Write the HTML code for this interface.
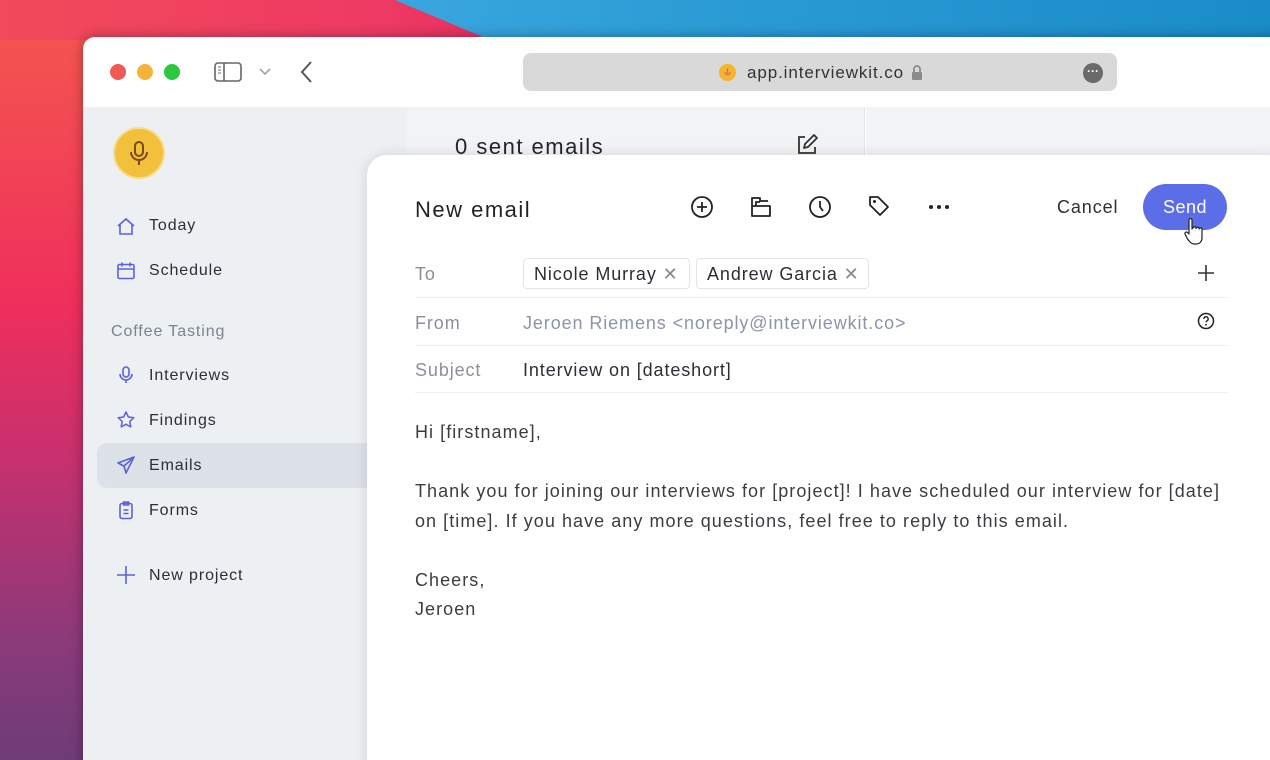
<!DOCTYPE html>
<html><head><meta charset="utf-8"><style>
*{margin:0;padding:0;box-sizing:border-box}
html,body{width:1270px;height:760px;overflow:hidden;font-family:"Liberation Sans",sans-serif;letter-spacing:.9px}
body{position:relative;background:linear-gradient(180deg,#f45a4e 0%,#ef2f5c 40%,#c8306e 60%,#8a3a7a 85%,#6e3c78 100%)}
.sky{position:absolute;left:0;top:0;width:1270px;height:40px;background:linear-gradient(90deg,#f24a5a 0%,#ee3a64 30%,#e83060 38%)}
.blue{position:absolute;left:0;top:0;width:1270px;height:40px;background:linear-gradient(90deg,#4ab4e8,#2a9ad4 60%,#1a8cc8);clip-path:polygon(395px 0,1270px 0,1270px 40px,490px 40px)}
.win{position:absolute;left:83px;top:37px;width:1200px;height:740px;background:#fff;border-radius:12px 0 0 0;overflow:hidden;box-shadow:0 0 12px rgba(0,0,0,.35)}
.a{position:absolute}
.tl{position:absolute;top:27px;width:16px;height:16px;border-radius:50%}
.side{position:absolute;left:0;top:70px;width:324px;height:680px;background:#edf0f3}
.mid{position:absolute;left:324px;top:70px;width:458px;height:680px;background:#f2f3f5;border-right:1px solid #e3e5e8}
.right{position:absolute;left:783px;top:70px;width:420px;height:680px;background:#f3f4f6}
.item{position:absolute;left:66px;font-size:16px;color:#2b2f36;margin-top:2px}
.ic{position:absolute;left:33px}
.modal{position:absolute;left:367px;top:155px;width:920px;height:620px;background:#fff;border-radius:20px 20px 0 0;box-shadow:0 0 14px rgba(0,0,0,.12)}
.m{position:absolute}
.lbl{position:absolute;left:48px;font-size:18px;color:#8a8f98}
.line{position:absolute;left:48px;width:812px;height:1px;background:#eceef1}
.chip{position:absolute;top:103px;height:31px;border:1px solid #e2e4e8;border-radius:4px;font-size:18px;color:#2b2f36;padding:5px 0 0 10px;white-space:nowrap}
.body{position:absolute;left:48px;font-size:18px;color:#3a3d42;white-space:nowrap;letter-spacing:1.05px}
</style></head><body>
<div class="sky"></div><div class="blue"></div>
<div class="win">
  <div class="tl" style="left:27px;background:#f05a52"></div>
  <div class="tl" style="left:54px;background:#f6b33a"></div>
  <div class="tl" style="left:81px;background:#2cc840"></div>
  <svg class="a" style="left:131px;top:25px" width="28" height="20" viewBox="0 0 28 20"><rect x="1" y="1" width="26" height="18" rx="3" fill="none" stroke="#666" stroke-width="1.6"/><line x1="10" y1="1" x2="10" y2="19" stroke="#666" stroke-width="1.6"/><path d="M4 5h3M4 8h3M4 11h3" stroke="#888" stroke-width="1.2"/></svg>
  <svg class="a" style="left:176px;top:31px" width="12" height="8"><path d="M1 1l5 5 5-5" fill="none" stroke="#999" stroke-width="1.5"/></svg>
  <svg class="a" style="left:216px;top:23px" width="14" height="24"><path d="M12 2L3 12l9 10" fill="none" stroke="#555" stroke-width="2"/></svg>
  <div class="a" style="left:440px;top:16px;width:594px;height:38px;background:#d9d9d9;border-radius:8px"></div>
  <div class="a" style="left:636px;top:27px;width:17px;height:17px;border-radius:50%;background:#f5b330"><svg width="17" height="17"><path d="M8.5 4.5v5M6 8a2.5 2.5 0 005 0" stroke="#c66" stroke-width="1.2" fill="none"/></svg></div>
  <div class="a" style="left:664px;top:26px;font-size:17px;color:#333">app.interviewkit.co</div>
  <svg class="a" style="left:828px;top:27px" width="12" height="17"><path d="M3 8V5a3 3 0 016 0v3" fill="none" stroke="#8a8a8a" stroke-width="1.8"/><rect x="1" y="8" width="10" height="8" rx="1" fill="#8a8a8a"/></svg>
  <div class="a" style="left:1000px;top:26px;width:20px;height:20px;border-radius:50%;background:#6a6a6a;color:#fff;font-size:12px;text-align:center;line-height:16px;font-weight:bold;letter-spacing:0">···</div>
  <div class="side">
    <div class="a" style="left:30px;top:20px;width:52px;height:52px;border-radius:50%;background:#f2c03a;border:2px solid #f7dc8e"><svg width="48" height="48" viewBox="0 0 48 48"><rect x="20" y="13" width="8" height="14" rx="4" fill="none" stroke="#7a4a1a" stroke-width="2"/><path d="M16 23a8 8 0 0016 0M24 31v5" fill="none" stroke="#7a4a1a" stroke-width="2"/></svg></div>
    <svg class="ic" style="top:109px" width="20" height="20" viewBox="0 0 20 20"><path d="M2 10L10 3l8 7M4 8.5V18h12V8.5" fill="none" stroke="#5a62d8" stroke-width="1.6"/></svg>
    <div class="item" style="top:108px">Today</div>
    <svg class="ic" style="top:154px" width="20" height="20" viewBox="0 0 20 20"><rect x="2" y="3.5" width="16" height="14" rx="1.5" fill="none" stroke="#5a62d8" stroke-width="1.6"/><path d="M2 8h16M6 1.5v4M14 1.5v4" stroke="#5a62d8" stroke-width="1.6"/></svg>
    <div class="item" style="top:153px">Schedule</div>
    <div class="item" style="left:28px;top:214px;color:#7b8290">Coffee Tasting</div>
    <svg class="ic" style="top:258px" width="20" height="20" viewBox="0 0 20 20"><rect x="7" y="2" width="6" height="10" rx="3" fill="none" stroke="#5a62d8" stroke-width="1.6"/><path d="M4 9a6 6 0 0012 0M10 15v3" fill="none" stroke="#5a62d8" stroke-width="1.6"/></svg>
    <div class="item" style="top:258px">Interviews</div>
    <svg class="ic" style="top:303px" width="20" height="20" viewBox="0 0 20 20"><path d="M10 2l2.4 5 5.4.7-4 3.8 1 5.4L10 14.3 5.2 16.9l1-5.4-4-3.8 5.4-.7z" fill="none" stroke="#5a62d8" stroke-width="1.5" stroke-linejoin="round"/></svg>
    <div class="item" style="top:303px">Findings</div>
    <div class="a" style="left:14px;top:336px;width:310px;height:45px;background:#dde1e8;border-radius:10px 0 0 10px"></div>
    <svg class="ic" style="top:348px" width="20" height="20" viewBox="0 0 20 20"><path d="M18 2L2 8l6 3 2 7zM8 11l10-9" fill="none" stroke="#5a62d8" stroke-width="1.6" stroke-linejoin="round"/></svg>
    <div class="item" style="top:348px">Emails</div>
    <svg class="ic" style="top:393px" width="20" height="20" viewBox="0 0 20 20"><rect x="4" y="3.5" width="12" height="15" rx="2" fill="none" stroke="#5a62d8" stroke-width="1.6"/><path d="M7.5 2h5v3h-5zM7.5 10h5M7.5 13.5h5" fill="none" stroke="#5a62d8" stroke-width="1.5"/></svg>
    <div class="item" style="top:393px">Forms</div>
    <svg class="ic" style="top:458px" width="20" height="20"><path d="M10 1v18M1 10h18" stroke="#5a62d8" stroke-width="1.6"/></svg>
    <div class="item" style="top:458px">New project</div>
  </div>
  <div class="mid">
    <div class="a" style="left:48px;top:27px;font-size:22px;color:#22252a;font-weight:500;letter-spacing:1.5px">0 sent emails</div>
    <svg class="a" style="left:388px;top:26px" width="24" height="24" viewBox="0 0 24 24"><path d="M10 4H4v16h16v-6" fill="none" stroke="#333" stroke-width="1.8"/><path d="M9 15l1-4 9-9 3 3-9 9z" fill="none" stroke="#333" stroke-width="1.8" stroke-linejoin="round"/></svg>
  </div>
  <div class="right"></div>
</div>
<div class="modal">
  <div class="m" style="left:48px;top:42px;font-size:22px;color:#1f2227;font-weight:500;letter-spacing:1.5px">New email</div>
  <svg class="m" style="left:323px;top:40px" width="24" height="24" viewBox="0 0 24 24"><circle cx="12" cy="12" r="10" fill="none" stroke="#222" stroke-width="1.8"/><path d="M12 7v10M7 12h10" stroke="#222" stroke-width="1.8"/></svg>
  <svg class="m" style="left:382px;top:40px" width="24" height="24" viewBox="0 0 24 24"><path d="M3 11V3h8v3h8M3 11h18v10H3z" fill="none" stroke="#222" stroke-width="1.8" stroke-linejoin="round"/><path d="M7 11V7h4" fill="none" stroke="#222" stroke-width="1.8"/></svg>
  <svg class="m" style="left:441px;top:40px" width="24" height="24" viewBox="0 0 24 24"><circle cx="12" cy="12" r="10" fill="none" stroke="#222" stroke-width="1.8"/><path d="M12 6v6l3 4" fill="none" stroke="#222" stroke-width="1.8"/></svg>
  <svg class="m" style="left:500px;top:39px" width="24" height="24" viewBox="0 0 24 24"><path d="M3 3h8l10 10-8 8L3 11z" fill="none" stroke="#222" stroke-width="1.8" stroke-linejoin="round"/><circle cx="7.5" cy="7.5" r="1.5" fill="#222"/></svg>
  <div class="m" style="left:560px;top:40px;width:26px;height:26px"><svg width="26" height="26"><circle cx="4" cy="12" r="2" fill="#222"/><circle cx="12" cy="12" r="2" fill="#222"/><circle cx="20" cy="12" r="2" fill="#222"/></svg></div>
  <div class="m" style="left:690px;top:42px;font-size:18px;color:#2b2f36">Cancel</div>
  <div class="m" style="left:776px;top:29px;width:84px;height:46px;border-radius:23px;background:#5b6ee8;color:#fff;font-size:18px;font-weight:500;text-align:center;line-height:46px;letter-spacing:.5px">Send</div>
  <svg class="m" style="left:816px;top:63px" width="20" height="28" viewBox="0 0 20 28"><path d="M6 2a1.5 1.5 0 013 0v9l1-1a1.5 1.5 0 013 .5 1.5 1.5 0 013 .5 1.5 1.5 0 013 1V20c0 3-2 6-6 6h-2c-3 0-5-3-7-6l-2-4a1.5 1.5 0 012.5-1.5L6 16z" fill="#fff" stroke="#222" stroke-width="1.2" stroke-linejoin="round"/></svg>
  <div class="lbl" style="top:109px">To</div>
  <div class="chip" style="left:156px;width:167px">Nicole Murray <span style="color:#888">✕</span></div>
  <div class="chip" style="left:329px;width:173px">Andrew Garcia <span style="color:#888">✕</span></div>
  <svg class="m" style="left:830px;top:109px" width="18" height="18"><path d="M9 1v16M1 9h16" stroke="#333" stroke-width="1.6"/></svg>
  <div class="line" style="top:142px"></div>
  <div class="lbl" style="top:158px">From</div>
  <div class="m" style="left:156px;top:158px;font-size:18px;color:#8d94a8">Jeroen Riemens &lt;noreply@interviewkit.co&gt;</div>
  <svg class="m" style="left:830px;top:157px" width="18" height="18" viewBox="0 0 18 18"><circle cx="9" cy="9" r="7.5" fill="none" stroke="#222" stroke-width="1.5"/><path d="M6.8 7a2.2 2.2 0 114 1.2c-.8.6-1.8 1-1.8 2.2" fill="none" stroke="#222" stroke-width="1.4"/><circle cx="9" cy="12.8" r=".9" fill="#222"/></svg>
  <div class="line" style="top:190px"></div>
  <div class="lbl" style="top:205px">Subject</div>
  <div class="m" style="left:156px;top:205px;font-size:18px;color:#2b2f36">Interview on [dateshort]</div>
  <div class="line" style="top:237px"></div>
  <div class="body" style="top:267px">Hi [firstname],</div>
  <div class="body" style="top:326px">Thank you for joining our interviews for [project]! I have scheduled our interview for [date]</div>
  <div class="body" style="top:356px">on [time]. If you have any more questions, feel free to reply to this email.</div>
  <div class="body" style="top:415px">Cheers,</div>
  <div class="body" style="top:444px">Jeroen</div>
</div>
</body></html>
